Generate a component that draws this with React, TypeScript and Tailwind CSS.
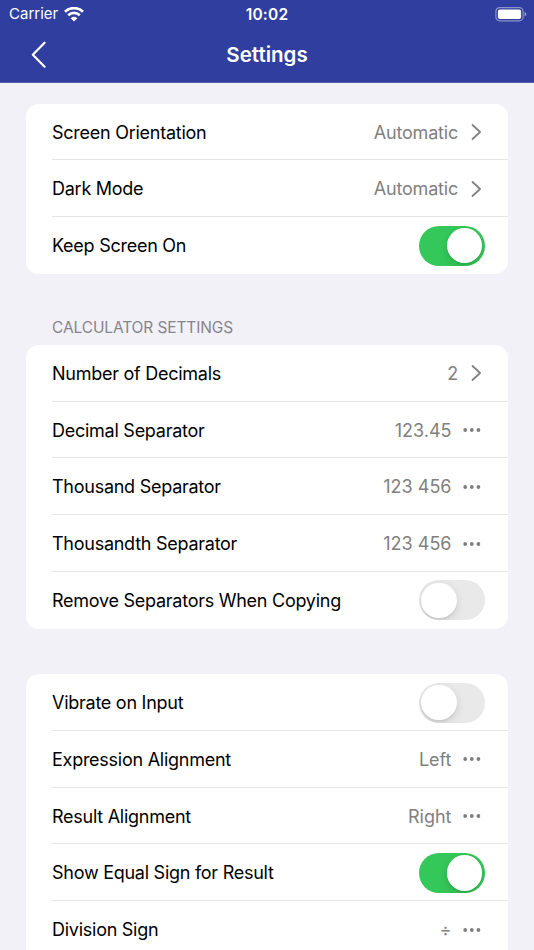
import { useState } from "react";

type RowProps = {
  label: string;
  value?: string;
  kind: "link" | "menu" | "toggle";
  on?: boolean;
};

const sections: { title?: string; rows: RowProps[] }[] = [
  {
    rows: [
      { label: "Screen Orientation", value: "Automatic", kind: "link" },
      { label: "Dark Mode", value: "Automatic", kind: "link" },
      { label: "Keep Screen On", kind: "toggle", on: true },
    ],
  },
  {
    title: "CALCULATOR SETTINGS",
    rows: [
      { label: "Number of Decimals", value: "2", kind: "link" },
      { label: "Decimal Separator", value: "123.45", kind: "menu" },
      { label: "Thousand Separator", value: "123 456", kind: "menu" },
      { label: "Thousandth Separator", value: "123 456", kind: "menu" },
      { label: "Remove Separators When Copying", kind: "toggle", on: false },
    ],
  },
  {
    rows: [
      { label: "Vibrate on Input", kind: "toggle", on: false },
      { label: "Expression Alignment", value: "Left", kind: "menu" },
      { label: "Result Alignment", value: "Right", kind: "menu" },
      { label: "Show Equal Sign for Result", kind: "toggle", on: true },
      { label: "Division Sign", value: "÷", kind: "menu" },
    ],
  },
];

const WifiIcon = () => (
  <svg width="20" height="15" viewBox="0 0 20 15" fill="none" stroke="white">
    <path d="M1 4.8a13 13 0 0 1 18 0" strokeWidth="2.8" />
    <path d="M4.2 8.3a8.3 8.3 0 0 1 11.6 0" strokeWidth="2.7" />
    <path d="M10 14.4 6.7 11.2a4.7 4.7 0 0 1 6.6 0Z" fill="white" stroke="none" />
  </svg>
);

const BatteryIcon = () => (
  <svg width="32" height="15" viewBox="0 0 32 15" fill="none">
    <rect x="0.9" y="0.6" width="27.2" height="13.2" rx="3.8" stroke="white" strokeOpacity="0.45" strokeWidth="1.2" />
    <rect x="2.9" y="2.4" width="23.2" height="9.6" rx="2" fill="white" />
    <path d="M29.6 5c1.1.4 1.7 1.2 1.7 2.2s-.6 1.8-1.7 2.2Z" fill="white" fillOpacity="0.5" />
  </svg>
);

const Chevron = () => (
  <svg width="11" height="16" viewBox="0 0 11 16" fill="none" stroke="#7f7f7f" strokeWidth="1.7" className="mr-[3px] ml-[13px] shrink-0">
    <path d="m1.5 1 7.6 7-7.6 7" strokeLinecap="round" strokeLinejoin="round" />
  </svg>
);

const Dots = () => (
  <svg width="18" height="4" viewBox="0 0 18 4" fill="#7f7f7f" className="mr-1 ml-[11.5px] shrink-0">
    <circle cx="2.2" cy="2" r="1.9" />
    <circle cx="8.8" cy="2" r="1.9" />
    <circle cx="15.4" cy="2" r="1.9" />
  </svg>
);

const Toggle = ({ label, defaultOn }: { label: string; defaultOn: boolean }) => {
  const [on, setOn] = useState(defaultOn);

  return (
    <button
      role="switch"
      aria-checked={on}
      aria-label={label}
      onClick={() => setOn(!on)}
      className={`flex h-10 w-[66px] shrink-0 items-center overflow-hidden rounded-full pr-[2.8px] pl-[2.2px] ${
        on ? "justify-end bg-[#34c759]" : "justify-start bg-[#e9e9ea]"
      }`}
    >
      <span className="size-[35.5px] rounded-full bg-white shadow-[0_3px_8px_rgba(0,0,0,0.13),0_2px_1px_rgba(0,0,0,0.05)]" />
    </button>
  );
};

const Row = ({ label, value, kind, on = false }: RowProps) => (
  <div className="group flex h-[56.75px] shrink-0 pl-[26px]">
    <div className="flex flex-1 items-center border-b border-[#e6e6e7] pt-[1.4px] pr-[23px] group-last:border-transparent">
      <span className="flex-1 tracking-[-0.26px] whitespace-nowrap text-black">{label}</span>
      {value && (
        <span className={`whitespace-nowrap text-[#808080] ${kind === "link" ? "tracking-[-0.2px]" : ""}`}>
          {value}
        </span>
      )}
      {kind === "link" && <Chevron />}
      {kind === "menu" && <Dots />}
      {kind === "toggle" && <Toggle label={label} defaultOn={on} />}
    </div>
  </div>
);

const App = () => {
  return (
    <div className="flex h-[950px] w-[534px] flex-col overflow-hidden bg-[#f2f1f7] font-['Inter','Liberation_Sans',sans-serif]">
      <header className="h-[83px] shrink-0 border-b border-[#5460ae] bg-[#303e9f] text-white">
        <div className="grid h-7 grid-cols-3 items-center pr-[7px] pl-[9px] text-[15px]">
          <div className="flex items-center gap-[6px]">
            <span>Carrier</span>
            <WifiIcon />
          </div>
          <span className="pt-px pr-[2px] text-center text-[15.5px] font-semibold tracking-[0.2px]">10:02</span>
          <div className="flex justify-end">
            <BatteryIcon />
          </div>
        </div>
        <div className="grid h-[54px] grid-cols-[60px_1fr_60px] items-center">
          <button aria-label="Back" className="pl-[31px]">
            <svg width="16" height="28" viewBox="0 0 16 28" fill="none" stroke="white" strokeWidth="2.2">
              <path d="M13.6 1.7 1.8 13.7l11.8 12" strokeLinecap="round" strokeLinejoin="round" />
            </svg>
          </button>
          <h1 className="text-center text-[20.5px] font-semibold">Settings</h1>
        </div>
      </header>

      <main className="flex flex-col px-[26px] pt-[20.5px] text-[18px]">
        {sections.map((section, i) => (
          <section key={i} className={i === 0 ? "" : section.title ? "mt-[43px]" : "mt-[45.5px]"}>
            {section.title && (
              <h2 className="h-7 pl-[26px] text-[15.5px] leading-[22px] tracking-[-0.12px] text-[#85858b]">
                {section.title}
              </h2>
            )}
            <div className={`flex flex-col bg-white ${i === sections.length - 1 ? "rounded-t-[13px]" : "rounded-[13px]"}`}>
              {section.rows.map((row) => (
                <Row key={row.label} {...row} />
              ))}
            </div>
          </section>
        ))}
      </main>
    </div>
  );
};

export default App;
